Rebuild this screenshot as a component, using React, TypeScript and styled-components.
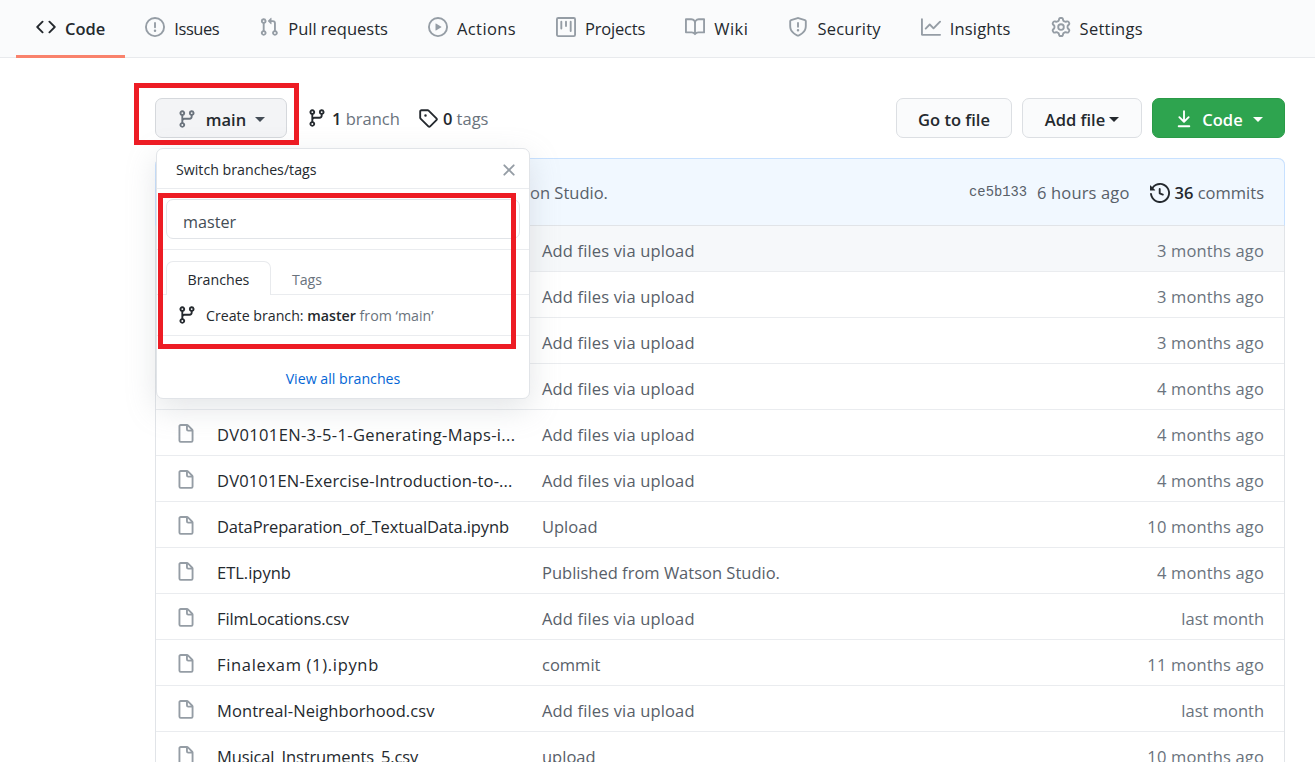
import React from "react";
import styled, { createGlobalStyle } from "styled-components";

const Global = createGlobalStyle`
  html, body { margin: 0; padding: 0; background: #fff; height: 100%; overflow: hidden; }
  body { font-family: "Open Sans", "Noto Sans", sans-serif; color: #24292e; }
`;

const P = {
  code: "M4.72 3.22a.75.75 0 011.06 1.06L2.06 8l3.72 3.72a.75.75 0 11-1.06 1.06L.47 8.53a.75.75 0 010-1.06l4.25-4.25zm6.56 0a.75.75 0 10-1.06 1.06L13.94 8l-3.72 3.72a.75.75 0 101.06 1.06l4.25-4.25a.75.75 0 000-1.06l-4.25-4.25z",
  issue: "M8 1.5a6.5 6.5 0 100 13 6.5 6.5 0 000-13zM0 8a8 8 0 1116 0A8 8 0 010 8zm9 3a1 1 0 11-2 0 1 1 0 012 0zm-.25-6.25a.75.75 0 00-1.5 0v3.5a.75.75 0 001.5 0v-3.5z",
  pr: "M7.177 3.073L9.573.677A.25.25 0 0110 .854v4.792a.25.25 0 01-.427.177L7.177 3.427a.25.25 0 010-.354zM3.75 2.5a.75.75 0 100 1.5.75.75 0 000-1.5zm-2.25.75a2.25 2.25 0 113 2.122v5.256a2.251 2.251 0 11-1.5 0V5.372A2.25 2.25 0 011.5 3.25zM11 2.5h-1V4h1a1 1 0 011 1v5.628a2.251 2.251 0 101.5 0V5A2.5 2.5 0 0011 2.5zm1 10.25a.75.75 0 111.5 0 .75.75 0 01-1.5 0zM3.75 12a.75.75 0 100 1.5.75.75 0 000-1.5z",
  play: "M1.5 8a6.5 6.5 0 1113 0 6.5 6.5 0 01-13 0zM8 0a8 8 0 100 16A8 8 0 008 0zM6.379 5.227A.25.25 0 006 5.442v5.117a.25.25 0 00.379.214l4.264-2.559a.25.25 0 000-.428L6.379 5.227z",
  project: "M1.75 0A1.75 1.75 0 000 1.75v12.5C0 15.216.784 16 1.75 16h12.5A1.75 1.75 0 0016 14.25V1.75A1.75 1.75 0 0014.25 0H1.75zM1.5 1.75a.25.25 0 01.25-.25h12.5a.25.25 0 01.25.25v12.5a.25.25 0 01-.25.25H1.75a.25.25 0 01-.25-.25V1.75zM11.75 3a.75.75 0 00-.75.75v7.5a.75.75 0 001.5 0v-7.5a.75.75 0 00-.75-.75zm-8.25.75a.75.75 0 011.5 0v5.5a.75.75 0 01-1.5 0v-5.5zM8 3a.75.75 0 00-.75.75v3.5a.75.75 0 001.5 0v-3.5A.75.75 0 008 3z",
  book: "M0 1.75A.75.75 0 01.75 1h4.253c1.227 0 2.317.59 3 1.501A3.744 3.744 0 0111.006 1h4.245a.75.75 0 01.75.75v10.5a.75.75 0 01-.75.75h-4.507a2.25 2.25 0 00-1.591.659l-.622.621a.75.75 0 01-1.06 0l-.622-.621A2.25 2.25 0 005.258 13H.75a.75.75 0 01-.75-.75V1.75zm8.755 3a2.25 2.25 0 012.25-2.25H14.5v9h-3.757c-.71 0-1.4.201-1.992.572l.004-7.322zm-1.504 7.324l.004-5.073-.002-2.253A2.25 2.25 0 005.003 2.5H1.5v9h3.757a3.75 3.75 0 011.994.574z",
  shield: "M7.467.133a1.75 1.75 0 011.066 0l5.25 1.68A1.75 1.75 0 0115 3.48V7c0 1.566-.32 3.182-1.303 4.682-.983 1.498-2.585 2.813-5.032 3.855a1.7 1.7 0 01-1.33 0c-2.447-1.042-4.049-2.357-5.032-3.855C1.32 10.182 1 8.566 1 7V3.48a1.75 1.75 0 011.217-1.667l5.25-1.68zm.61 1.429a.25.25 0 00-.153 0l-5.25 1.68a.25.25 0 00-.174.238V7c0 1.358.275 2.666 1.057 3.86.784 1.194 2.121 2.34 4.366 3.297a.2.2 0 00.154 0c2.245-.956 3.582-2.104 4.366-3.298C13.225 9.666 13.5 8.36 13.5 7V3.48a.25.25 0 00-.174-.237l-5.25-1.68zM9 10.5a1 1 0 11-2 0 1 1 0 012 0zm-.25-5.75a.75.75 0 10-1.5 0v3a.75.75 0 001.5 0v-3z",
  graph: "M1.5 1.75a.75.75 0 00-1.5 0v12.5c0 .414.336.75.75.75h14.5a.75.75 0 000-1.5H1.5V1.75zm14.28 2.53a.75.75 0 00-1.06-1.06L10 7.94 7.53 5.47a.75.75 0 00-1.06 0L3.22 8.72a.75.75 0 001.06 1.06L7 7.06l2.47 2.47a.75.75 0 001.06 0l5.25-5.25z",
  gear: "M7.429 1.525a6.593 6.593 0 011.142 0c.036.003.108.036.137.146l.289 1.105c.147.56.55.967.997 1.189.174.086.341.183.501.29.417.278.97.423 1.53.27l1.102-.303c.11-.03.175.016.195.046.219.31.41.641.573.989.014.031.022.11-.059.19l-.815.806c-.411.406-.562.957-.53 1.456a4.588 4.588 0 010 .582c-.032.499.119 1.05.53 1.456l.815.806c.08.08.073.159.059.19a6.494 6.494 0 01-.573.99c-.02.029-.086.074-.195.045l-1.103-.303c-.559-.153-1.112-.008-1.529.27-.16.107-.327.204-.5.29-.449.222-.851.628-.998 1.189l-.289 1.105c-.029.11-.101.143-.137.146a6.613 6.613 0 01-1.142 0c-.036-.003-.108-.037-.137-.146l-.289-1.105c-.147-.56-.55-.967-.997-1.189a4.502 4.502 0 01-.501-.29c-.417-.278-.97-.423-1.53-.27l-1.102.303c-.11.03-.175-.016-.195-.046a6.492 6.492 0 01-.573-.989c-.014-.031-.022-.11.059-.19l.815-.806c.411-.406.562-.957.53-1.456a4.587 4.587 0 010-.582c.032-.499-.119-1.05-.53-1.456l-.815-.806c-.08-.08-.073-.159-.059-.19a6.44 6.44 0 01.573-.99c.02-.029.086-.075.195-.045l1.103.303c.559.153 1.112.008 1.529-.27.16-.107.327-.204.5-.29.449-.222.851-.628.998-1.189l.289-1.105c.029-.11.101-.143.137-.146zM8 0c-.236 0-.47.01-.701.03-.743.065-1.29.615-1.458 1.261l-.29 1.106c-.017.066-.078.158-.211.224a5.994 5.994 0 00-.668.386c-.123.082-.233.09-.3.071L3.27 2.776c-.644-.177-1.392.02-1.82.63a7.977 7.977 0 00-.704 1.217c-.315.675-.111 1.422.363 1.891l.815.806c.05.048.098.147.088.294a6.084 6.084 0 000 .772c.01.147-.038.246-.088.294l-.815.806c-.474.469-.678 1.216-.363 1.891.2.428.436.835.704 1.218.428.609 1.176.806 1.82.63l1.103-.303c.066-.019.176-.011.299.071.213.143.436.272.668.386.133.066.194.158.212.224l.289 1.106c.169.646.715 1.196 1.458 1.26a8.094 8.094 0 001.402 0c.743-.064 1.29-.614 1.458-1.26l.29-1.106c.017-.066.078-.158.211-.224a5.98 5.98 0 00.668-.386c.123-.082.233-.09.3-.071l1.102.302c.644.177 1.392-.02 1.82-.63.268-.382.505-.789.704-1.217.315-.675.111-1.422-.364-1.891l-.814-.806c-.05-.048-.098-.147-.088-.294a6.1 6.1 0 000-.772c-.01-.147.039-.246.088-.294l.814-.806c.475-.469.679-1.216.364-1.891a7.992 7.992 0 00-.704-1.218c-.428-.609-1.176-.806-1.82-.63l-1.103.303c-.066.019-.176.011-.299-.071a5.991 5.991 0 00-.668-.386c-.133-.066-.194-.158-.212-.224L10.16 1.29C9.99.645 9.444.095 8.701.031A8.094 8.094 0 008 0zm1.5 8a1.5 1.5 0 11-3 0 1.5 1.5 0 013 0zM11 8a3 3 0 11-6 0 3 3 0 016 0z",
  branch: "M11.75 2.5a.75.75 0 100 1.5.75.75 0 000-1.5zm-2.25.75a2.25 2.25 0 113 2.122V6A2.5 2.5 0 0110 8.5H6a1 1 0 00-1 1v1.128a2.251 2.251 0 11-1.5 0V5.372a2.25 2.25 0 111.5 0v1.836A2.492 2.492 0 016 7h4a1 1 0 001-1v-.628A2.25 2.25 0 019.5 3.25zM4.25 12a.75.75 0 100 1.5.75.75 0 000-1.5zM3.5 3.25a.75.75 0 111.5 0 .75.75 0 01-1.5 0z",
  tag: "M2.5 7.775V2.75a.25.25 0 01.25-.25h5.025a.25.25 0 01.177.073l6.25 6.25a.25.25 0 010 .354l-5.025 5.025a.25.25 0 01-.354 0l-6.25-6.25a.25.25 0 01-.073-.177zm-1.5 0V2.75C1 1.784 1.784 1 2.75 1h5.025c.464 0 .91.184 1.238.513l6.25 6.25a1.75 1.75 0 010 2.474l-5.026 5.026a1.75 1.75 0 01-2.474 0l-6.25-6.25A1.75 1.75 0 011 7.775zM6 5a1 1 0 100 2 1 1 0 000-2z",
  download: "M7.47 10.78a.75.75 0 001.06 0l3.75-3.75a.75.75 0 00-1.06-1.06L8.75 8.44V1.75a.75.75 0 00-1.5 0v6.69L4.78 5.97a.75.75 0 00-1.06 1.06l3.75 3.75zM3.75 13a.75.75 0 000 1.5h8.5a.75.75 0 000-1.5h-8.5z",
  history: "M1.643 3.143L.427 1.927A.25.25 0 000 2.104V5.75c0 .138.112.25.25.25h3.646a.25.25 0 00.177-.427L2.715 4.215a6.5 6.5 0 11-1.18 4.458.75.75 0 10-1.493.154 8.001 8.001 0 101.6-5.684zM7.75 4a.75.75 0 01.75.75v2.992l2.028.812a.75.75 0 01-.557 1.392l-2.5-1A.75.75 0 017 8.25v-3.5A.75.75 0 017.75 4z",
  file: "M3.75 1.5a.25.25 0 00-.25.25v11.5c0 .138.112.25.25.25h8.5a.25.25 0 00.25-.25V6H9.75A1.75 1.75 0 018 4.25V1.5H3.75zm5.75.56v2.19c0 .138.112.25.25.25h2.19L9.5 2.06zM2 1.75C2 .784 2.784 0 3.75 0h5.086c.464 0 .909.184 1.237.513l3.414 3.414c.329.328.513.773.513 1.237v8.086A1.75 1.75 0 0112.25 15h-8.5A1.75 1.75 0 012 13.25V1.75z",
  x: "M3.72 3.72a.75.75 0 011.06 0L8 6.94l3.22-3.22a.75.75 0 111.06 1.06L9.06 8l3.22 3.22a.75.75 0 11-1.06 1.06L8 9.06l-3.22 3.22a.75.75 0 01-1.06-1.06L6.94 8 3.72 4.78a.75.75 0 010-1.06z",
};

const Svg = styled.svg<{ $c?: string }>`
  flex: none;
  fill: ${(p) => p.$c || "currentColor"};
`;
const Icon = ({ d, c, size = 20 }: { d: string; c?: string; size?: number }) => (
  <Svg $c={c} width={size} height={size} viewBox="0 0 16 16" aria-hidden="true">
    <path fillRule="evenodd" d={d} />
  </Svg>
);

const Page = styled.div`
  width: 1315px;
  height: 762px;
  overflow: hidden;
`;
const Nav = styled.nav`
  height: 57px;
  padding-left: 16px;
  display: flex;
  background: #fafbfc;
  border-bottom: 1px solid #e8eaed;
`;
const NavItem = styled.a<{ $active?: boolean }>`
  height: 58px;
  box-sizing: border-box;
  padding: 0 20px 1px;
  display: flex;
  align-items: center;
  gap: 9px;
  font-size: 16.5px;
  color: #24292e;
  font-weight: ${(p) => (p.$active ? 600 : 400)};
  border-bottom: 3px solid ${(p) => (p.$active ? "#f9826c" : "transparent")};
`;
const NavText = styled.span<{ $ls: number }>`
  padding-top: 3px;
  letter-spacing: ${(p) => p.$ls}px;
`;
const Main = styled.main`
  padding: 40px 30px 0 155px;
`;
const Toolbar = styled.div`
  height: 40px;
  display: flex;
  align-items: center;
`;
const BranchWrap = styled.div`
  position: relative;
`;
const Btn = styled.button<{ $w: number; $primary?: boolean; $soft?: boolean }>`
  height: 40px;
  width: ${(p) => p.$w}px;
  box-sizing: border-box;
  display: flex;
  align-items: center;
  justify-content: center;
  padding: 2px 0 0;
  font: 600 16.5px "Open Sans", sans-serif;
  border-radius: 7px;
  border: 1px solid ${(p) => (p.$primary ? "#2a9a47" : p.$soft ? "#d5d8dc" : "#dcdfe3")};
  background: ${(p) => (p.$primary ? "#2ea44f" : p.$soft ? "#f3f4f6" : "#fafbfc")};
  color: ${(p) => (p.$primary ? "#fff" : "#24292e")};
`;
const Caret = styled.span<{ $c: string; $ml: number }>`
  width: 0;
  height: 0;
  margin-left: ${(p) => p.$ml}px;
  border-left: 5px solid transparent;
  border-right: 5px solid transparent;
  border-top: 5px solid ${(p) => p.$c};
`;
const BtnLabel = styled.span<{ $ml?: number }>`
  margin-left: ${(p) => p.$ml || 0}px;
`;
const Stat = styled.span<{ $ml: number }>`
  margin-left: ${(p) => p.$ml}px;
  display: flex;
  align-items: center;
  gap: 5px;
  font-size: 16.5px;
  color: #6a737d;
`;
const Strong = styled.b`
  font-weight: 600;
  color: #24292e;
`;
const Spacer = styled.div`
  flex: 1;
`;
const BtnGroup = styled.div`
  display: flex;
  gap: 10px;
`;
const RedBox = styled.div<{ $l: number; $t: number; $w: number; $h: number }>`
  position: absolute;
  left: ${(p) => p.$l}px;
  top: ${(p) => p.$t}px;
  width: ${(p) => p.$w}px;
  height: ${(p) => p.$h}px;
  box-sizing: border-box;
  border: 5px solid #ed1c24;
  z-index: 30;
  pointer-events: none;
`;
const Dropdown = styled.div`
  position: absolute;
  left: 1px;
  top: 50px;
  width: 374px;
  height: 251px;
  box-sizing: border-box;
  background: #fff;
  border: 1px solid #e1e4e8;
  border-radius: 7px;
  box-shadow: 0 10px 30px rgba(149, 157, 165, 0.25);
  z-index: 20;
  display: flex;
  flex-direction: column;
`;
const DdHeader = styled.div`
  height: 40px;
  flex: none;
  box-sizing: border-box;
  padding: 2px 10px 0 19px;
  display: flex;
  align-items: center;
  justify-content: space-between;
  border-bottom: 1px solid #eaecef;
  font-size: 14.2px;
  font-weight: 500;
  color: #24292e;
`;
const DdSearch = styled.div`
  height: 61px;
  flex: none;
  box-sizing: border-box;
  padding: 10px 9px;
  border-bottom: 1px solid #eaecef;
`;
const SearchBox = styled.div`
  height: 40px;
  box-sizing: border-box;
  padding: 5px 16px 0;
  display: flex;
  align-items: center;
  border: 1px solid #e1e4e8;
  border-radius: 7px;
  font-size: 16.2px;
  color: #444d56;
`;
const Tabs = styled.div`
  height: 45px;
  flex: none;
  box-sizing: border-box;
  padding: 11px 0 0 9px;
  display: flex;
  border-bottom: 1px solid #eaecef;
`;
const Tab = styled.div<{ $active?: boolean }>`
  width: ${(p) => (p.$active ? 105 : 72)}px;
  height: 34px;
  box-sizing: border-box;
  padding-top: 2px;
  display: flex;
  align-items: center;
  justify-content: center;
  font-size: 14.2px;
  font-weight: 500;
  color: ${(p) => (p.$active ? "#24292e" : "#6a737d")};
  background: ${(p) => (p.$active ? "#fff" : "transparent")};
  border: ${(p) => (p.$active ? "1px solid #e8eaed" : "none")};
  border-bottom: none;
  border-radius: 7px 7px 0 0;
`;
const CreateRow = styled.div`
  height: 41px;
  flex: none;
  box-sizing: border-box;
  padding: 0 0 0 20px;
  display: flex;
  align-items: center;
  gap: 9px;
  font-size: 14.2px;
  font-weight: 500;
  color: #24292e;
  border-bottom: 1px solid #eaecef;
`;
const CreateText = styled.span`
  padding-top: 1px;
`;
const Semi = styled.b`
  font-weight: 600;
`;
const Muted = styled.span`
  font-weight: 400;
  color: #6a737d;
`;
const ViewAll = styled.a`
  flex: 1;
  padding-top: 23px;
  box-sizing: border-box;
  display: flex;
  align-items: center;
  justify-content: center;
  font-size: 14.2px;
  color: #0366d6;
`;
const Table = styled.div`
  margin-top: 20px;
  border: 1px solid #e1e4e8;
  border-top: none;
  border-radius: 7px;
`;
const Head = styled.div`
  height: 68px;
  box-sizing: border-box;
  margin: 0 -1px;
  padding: 1px 20px 0 214px;
  display: flex;
  align-items: center;
  background: #f1f8ff;
  border: 1px solid #c8e1ff;
  border-radius: 7px 7px 0 0;
  border-bottom-color: #e1e4e8;
  font-size: 16.5px;
  color: #586069;
`;
const Sha = styled.span`
  font: 13.8px "Liberation Mono", monospace;
  margin-right: 10px;
`;
const Hours = styled.span`
  letter-spacing: 0.15px;
`;
const Commits = styled.span`
  margin-left: 20px;
  display: flex;
  align-items: center;
  gap: 5px;
  color: #586069;
`;
const Row = styled.div<{ $tint?: boolean }>`
  height: 46px;
  box-sizing: border-box;
  padding: 3px 20px 0;
  display: grid;
  grid-template-columns: 41px 325px 1fr auto;
  align-items: center;
  border-bottom: 1px solid #eaecef;
  background: ${(p) => (p.$tint ? "#f6f8fa" : "#fff")};
  font-size: 16.5px;
`;
const FileIcon = styled.span`
  display: flex;
  color: #959da5;
`;
const Name = styled.span<{ $ls: number }>`
  color: #24292e;
  white-space: nowrap;
  padding-top: 1px;
  letter-spacing: ${(p) => p.$ls}px;
`;
const Msg = styled.span<{ $ls: number }>`
  color: #586069;
  padding-top: 1px;
  letter-spacing: ${(p) => p.$ls}px;
`;
const Age = styled.span<{ $ls: number }>`
  color: #6a737d;
  padding-top: 1px;
  letter-spacing: ${(p) => p.$ls}px;
`;

const tabs = [
  ["code", "Code", 0],
  ["issue", "Issues", -0.45],
  ["pr", "Pull requests", 0],
  ["play", "Actions", 0.4],
  ["project", "Projects", -0.2],
  ["book", "Wiki", 0.5],
  ["shield", "Security", 0.25],
  ["graph", "Insights", 0.15],
  ["gear", "Settings", 0.25],
] as const;

const rows: [string, string, string, number][] = [
  ["", "Add files via upload", "3 months ago", 0],
  ["", "Add files via upload", "3 months ago", 0],
  ["", "Add files via upload", "3 months ago", 0],
  ["", "Add files via upload", "4 months ago", 0],
  ["DV0101EN-3-5-1-Generating-Maps-i...", "Add files via upload", "4 months ago", 0.35],
  ["DV0101EN-Exercise-Introduction-to-...", "Add files via upload", "4 months ago", 0.16],
  ["DataPreparation_of_TextualData.ipynb", "Upload", "10 months ago", -0.14],
  ["ETL.ipynb", "Published from Watson Studio.", "4 months ago", 0],
  ["FilmLocations.csv", "Add files via upload", "last month", -0.12],
  ["Finalexam (1).ipynb", "commit", "11 months ago", 0.68],
  ["Montreal-Neighborhood.csv", "Add files via upload", "last month", 0.08],
  ["Musical_Instruments_5.csv", "upload", "10 months ago", -0.12],
];

export default function App() {
  return (
    <Page>
      <Global />
      <Nav>
        {tabs.map(([k, label, ls], i) => (
          <NavItem key={label} $active={i === 0}>
            <Icon d={P[k]} c={i === 0 ? "#24292e" : "#959da5"} />
            <NavText $ls={ls}>{label}</NavText>
          </NavItem>
        ))}
      </Nav>
      <Main>
        <Toolbar>
          <BranchWrap>
            <Btn $w={132} $soft>
              <Icon d={P.branch} c="#6a737d" />
              <BtnLabel $ml={9}>main</BtnLabel>
              <Caret $c="#444d56" $ml={9} />
            </Btn>
            <RedBox $l={-21} $t={-15} $w={165} $h={62} />
            <Dropdown>
              <DdHeader>
                Switch branches/tags
                <Icon d={P.x} c="#959da5" />
              </DdHeader>
              <DdSearch>
                <SearchBox>master</SearchBox>
              </DdSearch>
              <Tabs>
                <Tab $active>Branches</Tab>
                <Tab>Tags</Tab>
              </Tabs>
              <CreateRow>
                <Icon d={P.branch} c="#24292e" />
                <CreateText>
                  Create branch: <Semi>master</Semi> <Muted>from ‘main’</Muted>
                </CreateText>
              </CreateRow>
              <ViewAll>View all branches</ViewAll>
            </Dropdown>
            <RedBox $l={3} $t={95} $w={358} $h={156} />
          </BranchWrap>
          <Stat $ml={20}>
            <Icon d={P.branch} c="#24292e" />
            <span>
              <Strong>1</Strong> branch
            </span>
          </Stat>
          <Stat $ml={18}>
            <Icon d={P.tag} c="#24292e" />
            <span>
              <Strong>0</Strong> tags
            </span>
          </Stat>
          <Spacer />
          <BtnGroup>
            <Btn $w={116}>
              <BtnLabel>Go to file</BtnLabel>
            </Btn>
            <Btn $w={120}>
              <BtnLabel>Add file</BtnLabel>
              <Caret $c="#24292e" $ml={4} />
            </Btn>
            <Btn $w={133} $primary>
              <Icon d={P.download} c="#fff" />
              <BtnLabel $ml={8}>Code</BtnLabel>
              <Caret $c="#fff" $ml={10} />
            </Btn>
          </BtnGroup>
        </Toolbar>
        <Table>
          <Head>
            Published from Watson Studio.
            <Spacer />
            <Sha>ce5b133</Sha>
            <Hours>6 hours ago</Hours>
            <Commits>
              <Icon d={P.history} c="#24292e" />
              <span>
                <Strong>36</Strong> commits
              </span>
            </Commits>
          </Head>
          {rows.map(([n, m, a, ls], i) => (
            <Row key={i} $tint={i === 0}>
              <FileIcon>
                <Icon d={P.file} />
              </FileIcon>
              <Name $ls={ls}>{n}</Name>
              <Msg $ls={m.startsWith("Add") ? 0.15 : 0}>{m}</Msg>
              <Age $ls={a.includes("months") ? 0.15 : 0}>{a}</Age>
            </Row>
          ))}
        </Table>
      </Main>
    </Page>
  );
}
